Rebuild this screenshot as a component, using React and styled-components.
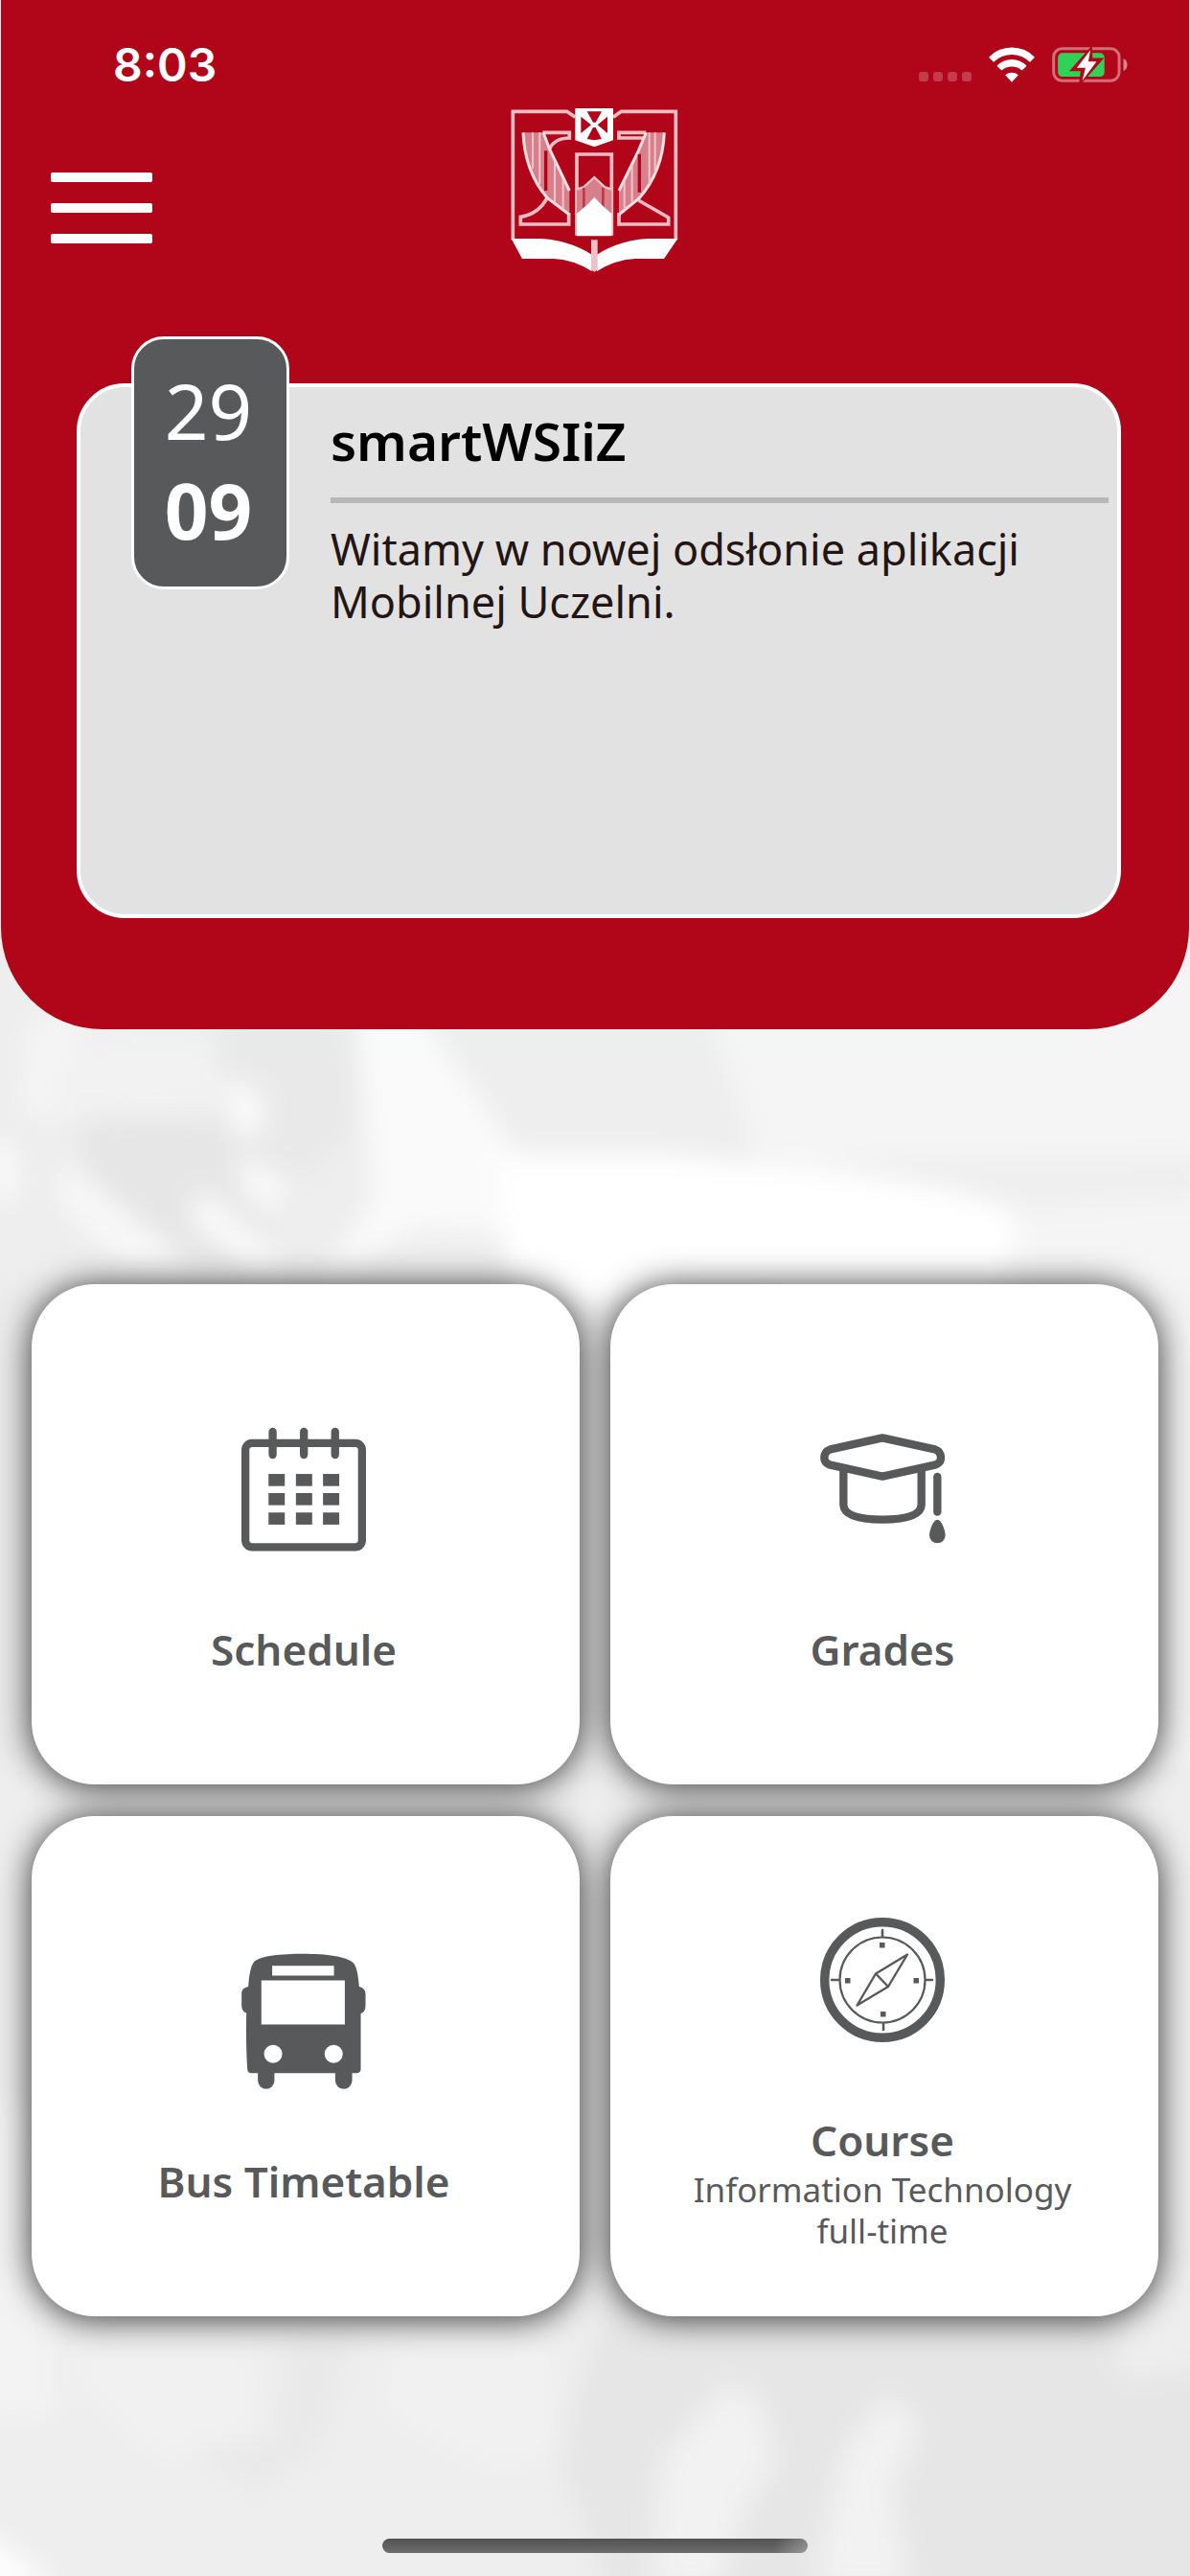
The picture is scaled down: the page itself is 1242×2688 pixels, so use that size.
import React from "react";
import styled, { createGlobalStyle } from "styled-components";

const RED = "#b1061a";
const INK = "#58595b";

const GlobalStyle = createGlobalStyle`
  *, *::before, *::after { box-sizing: border-box; }
  body {
    margin: 0;
    background: #eeeeee;
    font-family: "Noto Sans", "Open Sans", sans-serif;
  }
  button { font: inherit; color: inherit; border: 0; cursor: pointer; }
  h1, p { margin: 0; }
  svg { display: block; }
`;

const Screen = styled.div`
  position: relative;
  isolation: isolate;
  min-height: 100vh;
  display: flex;
  flex-direction: column;
  overflow: hidden;
`;

const Backdrop = styled.svg`
  position: absolute;
  inset: 0;
  z-index: -1;
  width: 100%;
  height: 100%;
`;

const Header = styled.header`
  margin: 0 1px;
  padding-bottom: 116px;
  background: ${RED};
  border-radius: 0 0 106px 106px;
`;

const StatusBar = styled.div`
  display: flex;
  align-items: flex-start;
  justify-content: space-between;
  height: 112px;
  padding: 36px 64px 0 117px;
`;

const Clock = styled.time`
  font: 600 48px/64px Inter, sans-serif;
  color: #ffffff;
`;

const StatusIcons = styled.div`
  display: flex;
  align-items: flex-end;
  gap: 18px;
  padding-top: 13px;
`;

const TopBar = styled.nav`
  display: grid;
  grid-template-columns: 1fr auto 1fr;
  align-items: end;
  padding: 0 52px;
`;

const MenuButton = styled.button`
  display: flex;
  flex-direction: column;
  gap: 22px;
  width: 106px;
  padding: 0;
  margin-bottom: 30px;
  background: none;
`;

const MenuBar = styled.span`
  height: 10px;
  border-radius: 2px;
  background: #ffffff;
`;

const NewsCard = styled.article`
  display: flex;
  align-items: flex-start;
  gap: 43px;
  min-height: 558px;
  margin: 116px 71px 0 79px;
  padding: 0 9px 0 53px;
  border: 4px solid #ffffff;
  border-radius: 50px;
  background: #e2e2e2;
`;

const DateTile = styled.time`
  display: flex;
  flex-direction: column;
  align-items: center;
  flex: none;
  width: 165px;
  height: 264px;
  margin-top: -53px;
  padding: 22px 4px 0 0;
  border: 3px solid #ffffff;
  border-radius: 34px;
  background: ${INK};
  color: #ffffff;
  font-size: 80px;
  line-height: 104px;
`;

const Month = styled.strong`
  font-weight: 700;
`;

const NewsBody = styled.div`
  flex: 1;
`;

const NewsTitle = styled.h1`
  padding: 18px 0 22px;
  border-bottom: 6px solid #b7b7b7;
  font-size: 55px;
  line-height: 75px;
  font-weight: 600;
  color: #000000;
`;

const NewsText = styled.p`
  padding-top: 20px;
  font-size: 45px;
  line-height: 55px;
  color: #231513;
`;

const TileGrid = styled.main`
  display: grid;
  grid-template-columns: 1fr 1fr;
  grid-auto-rows: 522px;
  gap: 33px 32px;
  padding: 266px 33px 0;
`;

const Tile = styled.button`
  display: flex;
  flex-direction: column;
  align-items: center;
  justify-content: center;
  padding: 2px 4px 0 0;
  border-radius: 66px;
  background: #ffffff;
  color: ${INK};
  box-shadow: 0 2px 36px rgba(0, 0, 0, 0.8);
`;

const IconBox = styled.span`
  display: grid;
  place-items: center;
  height: 200px;
  margin-bottom: 38px;
`;

const TileLabel = styled.span`
  font-size: 44px;
  line-height: 59px;
  font-weight: 600;
`;

const TileDetail = styled.span`
  font-size: 35px;
  line-height: 43px;
`;

const HomeIndicator = styled.div`
  width: 444px;
  height: 15px;
  margin: auto auto 24px;
  border-radius: 8px;
  background:
    linear-gradient(100deg, transparent 92%, rgba(255, 255, 255, 0.3)),
    linear-gradient(#525252, #6d6d6d);
`;

function Background() {
  return (
    <Backdrop viewBox="0 0 1242 2688" preserveAspectRatio="none" aria-hidden="true">
      <defs>
        <filter id="soft" x="-20%" y="-20%" width="140%" height="140%">
          <feGaussianBlur stdDeviation="13" />
        </filter>
      </defs>
      <rect width="1242" height="2688" fill="#eeeeee" />
      <g filter="url(#soft)">
        <path d="M720 1000H1300V1400H800L785 1190Z" fill="#f5f5f5" />
        <path d="M30 1060H90L70 1170L20 1160Z" fill="#f4f4f4" />
        <path d="M120 1080H215L240 1150L150 1160L60 1180V1110Z" fill="#f2f2f2" />
        <path d="M220 1060H370V1180L310 1240L250 1200Z" fill="#e9e9e9" />
        <path d="M80 1165L240 1170L250 1240L300 1320H200L90 1230Z" fill="#e6e6e6" />
        <path d="M240 1125L275 1145L270 1185L245 1180Z" fill="#fcfcfc" />
        <path d="M-10 1190L15 1200V1250H-10Z" fill="#fbfbfb" />
        <path d="M70 1215L200 1320H130L60 1250Z" fill="#f8f8f8" />
        <path d="M210 1240L300 1320H260L200 1275Z" fill="#fbfbfb" />
        <path d="M250 1210L300 1230L290 1260L255 1250Z" fill="#f9f9f9" />
        <path d="M370 1040H425L545 1210V1290L440 1280L340 1330L390 1250Z" fill="#fafafa" />
        <path d="M520 1205L700 1205L860 1225L980 1240Q1060 1255 1060 1275L1050 1360H530Z" fill="#ffffff" />
        <path d="M860 1208L1260 1205V1250L1070 1265Z" fill="#efefef" />
        <path d="M-20 1340H60V1840H-20Z" fill="#ebebeb" />
        <path d="M1190 1340H1260V1840H1190Z" fill="#f3f3f3" />
        <path d="M-20 2200H50L60 2520H-20Z" fill="#f3f3f3" />
        <path d="M640 2380H1260V2720H640L580 2560Z" fill="#e6e6e6" />
        <path d="M1150 2380H1260V2470L1170 2480Z" fill="#eeeeee" />
        <path d="M70 2450H270L265 2550L170 2570L90 2500Z" fill="#f1f1f1" />
        <path d="M410 2440H570L590 2560L520 2580L400 2520Z" fill="#f1f1f1" />
        <path d="M300 2440H370L330 2560L270 2600L200 2560L290 2540Z" fill="#e9e9e9" />
        <path d="M755 2490L790 2500L810 2570L780 2610L750 2700H680L690 2570Z" fill="#f2f2f2" />
        <path d="M925 2500L960 2530L930 2600L950 2700H850L880 2560Z" fill="#f2f2f2" />
        <path d="M-20 2640L60 2700H-20Z" fill="#ffffff" />
      </g>
    </Backdrop>
  );
}

function SignalDots() {
  return (
    <svg width="55" height="11" viewBox="0 0 55 11" fill="#ffffff" fillOpacity="0.22" aria-hidden="true">
      {[0, 15, 30, 45].map((x) => (
        <rect key={x} x={x} width="10" height="10" rx="3" />
      ))}
    </svg>
  );
}

function WifiIcon() {
  return (
    <svg width="48" height="37" viewBox="335 86 143 110" fill="#ffffff" aria-hidden="true">
      <path d="M335 118A98 98 0 0 1 478 118L463 133A81 81 0 0 0 350 133Z" />
      <path d="M360 145A64 64 0 0 1 453 145L438 159A47 47 0 0 0 375 159Z" />
      <path d="M386 173A33 33 0 0 1 427 173L406.500 195Z" />
    </svg>
  );
}

function BatteryIcon() {
  return (
    <svg width="79" height="37" viewBox="534 86 238 112" aria-hidden="true">
      <rect x="538.500" y="91.500" width="207" height="101" rx="26" fill="none" stroke="#ffffff" strokeOpacity="0.42" strokeWidth="9" />
      <rect x="552" y="105" width="147" height="75" rx="14" fill="#30d158" />
      <path d="M759 123Q771 128 771 142Q771 156 759 162Z" fill="#ffffff" fillOpacity="0.5" />
      <path d="M655 95L600 157H630L625 195L686 126H656Z" fill={RED} stroke={RED} strokeWidth="11" />
      <path d="M655 95L612 152H639L629 193L674 132H648Z" fill="#ffffff" />
    </svg>
  );
}

function Crest() {
  return (
    <svg width="180" height="172" viewBox="93 69 534 516" role="img" aria-label="WSIiZ">
      <g fill="none" stroke="#efbcc2" strokeWidth="11">
        <path d="M298 100L272 82H103V484" />
        <path d="M417 100L442 82H613V484" />
        <path d="M303 470V216H412V470" />
        <path d="M196 148H280V165Q230 165 215 205" />
        <path d="M520 148H435V165H512" />
        <path d="M210 352Q185 402 127 412V435H278V400" />
        <path d="M496 360L590 414V435H435V400" />
      </g>
      <path d="M135 148H198L218 200L280 330V405L210 352Q140 270 135 148Z" fill="#d7808b" />
      <path d="M577 148H520L496 205L435 330V405L498 354Q572 270 577 148Z" fill="#d7808b" />
      <g fill="none" stroke="#f7dfe2" strokeWidth="9">
        <path d="M135 148Q140 270 210 352L280 405" />
        <path d="M198 148L218 200L280 330" />
        <path d="M577 148Q572 270 498 354L435 405" />
        <path d="M520 148L496 205L435 330" />
      </g>
      <g stroke="#f0c4c9" strokeWidth="6">
        <path d="M165 148V260M187 148V310M234 240V365M260 295V388" />
        <path d="M548 148V275M530 148V310M476 250V365M452 300V385" />
      </g>
      <path d="M206 205V330M499 215V335" stroke={RED} strokeWidth="10" />
      <path d="M303 326L325 318L358 288L390 318L412 326V400H303Z" fill="#d7808b" />
      <path d="M303 326L325 318L358 288L390 318L412 326" fill="none" stroke="#f0c4c9" strokeWidth="7" />
      <path d="M325 320V385M385 320V385" stroke={RED} strokeOpacity="0.6" strokeWidth="8" />
      <path d="M303 472V402L340 370L358 350L376 370L412 402V472Z" fill="#ffffff" />
      <path d="M298 72H417V172L358 193L298 172Z" fill="#ffffff" />
      <path d="M335 82H381L362 116H354ZM335 168L354 132H362L381 168L358 172ZM316 98L348 124L316 150ZM399 98L368 124L399 150Z" fill={RED} />
      <path d="M98 480H190Q280 485 350 530V582Q290 545 230 543H132Z" fill="#ffffff" />
      <path d="M619 480H526Q436 485 366 530V582Q426 545 486 543H576Z" fill="#ffffff" />
      <path d="M348 484H368V578L358 584L348 578Z" fill="#eec1c8" />
    </svg>
  );
}

function CalendarIcon() {
  return (
    <svg width="130" height="130" viewBox="155 91 391 390" aria-hidden="true">
      <g fill="none" stroke={INK} strokeWidth="25" strokeLinecap="round">
        <rect x="167.500" y="141.500" width="366" height="326" rx="21" />
        <path d="M253 105V178M351 105V178M449 105V178" />
      </g>
      {[238, 298, 359].map((y) =>
        [240, 326, 411].map((x) => (
          <rect key={`${x}-${y}`} x={x} y={y} width="51" height="38" fill={INK} />
        ))
      )}
    </svg>
  );
}

function GradesIcon() {
  return (
    <svg width="131" height="115" viewBox="168 112 393 345" aria-hidden="true">
      <g fill="none" stroke={INK} strokeWidth="25" strokeLinejoin="round" strokeLinecap="round">
        <path d="M363 125L200 161Q181 168 181 187Q181 204 200 210L363 246L527 210Q546 204 546 187Q546 168 527 161Z" />
        <path d="M241 225V335Q243 380 363 381Q483 380 485 335V225" />
        <path d="M535 247V357" />
      </g>
      <path d="M535 381C548 381 560 415 560 430A25 25 0 0 1 510 430C510 415 522 381 535 381Z" fill={INK} />
    </svg>
  );
}

function BusIcon() {
  return (
    <svg width="130" height="142" viewBox="333 87 390 427" aria-hidden="true">
      <path
        fill={INK}
        fillRule="evenodd"
        d="M354 192Q358 130 373 113C395 95 455 89 527 89C600 89 660 97 683 117C695 128 699 160 702 192Q722 197 722 215V252Q722 272 707 277V452Q706 463 694 464H680V487A26 26 0 0 1 627 487V464H436V487A26 26 0 0 1 384 487V464H364Q352 464 351 450Q346 380 348 275Q333 270 333 252V212Q334 196 354 192ZM429 127V158H623V127ZM395 173V311H657V173ZM432 375A28 28 0 1 0 432 432A28 28 0 1 0 432 375ZM622 375A28 28 0 1 0 622 432A28 28 0 1 0 622 375Z"
      />
    </svg>
  );
}

function CompassIcon() {
  return (
    <svg width="130" height="130" viewBox="0 0 130 130" aria-hidden="true">
      <g fill="none" stroke={INK} strokeLinejoin="round" strokeLinecap="round">
        <circle cx="65" cy="65" r="60.300" strokeWidth="9.400" />
        <circle cx="65" cy="65" r="44.500" strokeWidth="2.200" />
        <path strokeWidth="2.600" d="M65 13V20M66 110V117M12 65H20M110 65H117" />
        <path strokeWidth="2.400" d="M91 38.500L58 58.500L38.500 91.500L71 72ZM58 58.500L71 72" />
      </g>
      <path fill={INK} d="M62 26h5.500v5.500h-5.500ZM63 98h5.500v5.500h-5.500ZM26 63h5.500v5.500h-5.500ZM97.500 63h5.500v5.500h-5.500Z" />
    </svg>
  );
}

const tiles = [
  { label: "Schedule", Icon: CalendarIcon },
  { label: "Grades", Icon: GradesIcon },
  { label: "Bus Timetable", Icon: BusIcon },
  { label: "Course", Icon: CompassIcon, details: ["Information Technology", "full-time"] },
];

export default function App() {
  return (
    <Screen>
      <GlobalStyle />
      <Background />
      <Header>
        <StatusBar>
          <Clock>8:03</Clock>
          <StatusIcons>
            <SignalDots />
            <WifiIcon />
            <BatteryIcon />
          </StatusIcons>
        </StatusBar>
        <TopBar>
          <MenuButton type="button" aria-label="Menu">
            <MenuBar />
            <MenuBar />
            <MenuBar />
          </MenuButton>
          <Crest />
        </TopBar>
        <NewsCard>
          <DateTile dateTime="09-29">
            <span>29</span>
            <Month>09</Month>
          </DateTile>
          <NewsBody>
            <NewsTitle>smartWSIiZ</NewsTitle>
            <NewsText>Witamy w nowej odsłonie aplikacji Mobilnej Uczelni.</NewsText>
          </NewsBody>
        </NewsCard>
      </Header>
      <TileGrid>
        {tiles.map(({ label, Icon, details = [] }) => (
          <Tile key={label} type="button">
            <IconBox>
              <Icon />
            </IconBox>
            <TileLabel>{label}</TileLabel>
            {details.map((line) => (
              <TileDetail key={line}>{line}</TileDetail>
            ))}
          </Tile>
        ))}
      </TileGrid>
      <HomeIndicator />
    </Screen>
  );
}
